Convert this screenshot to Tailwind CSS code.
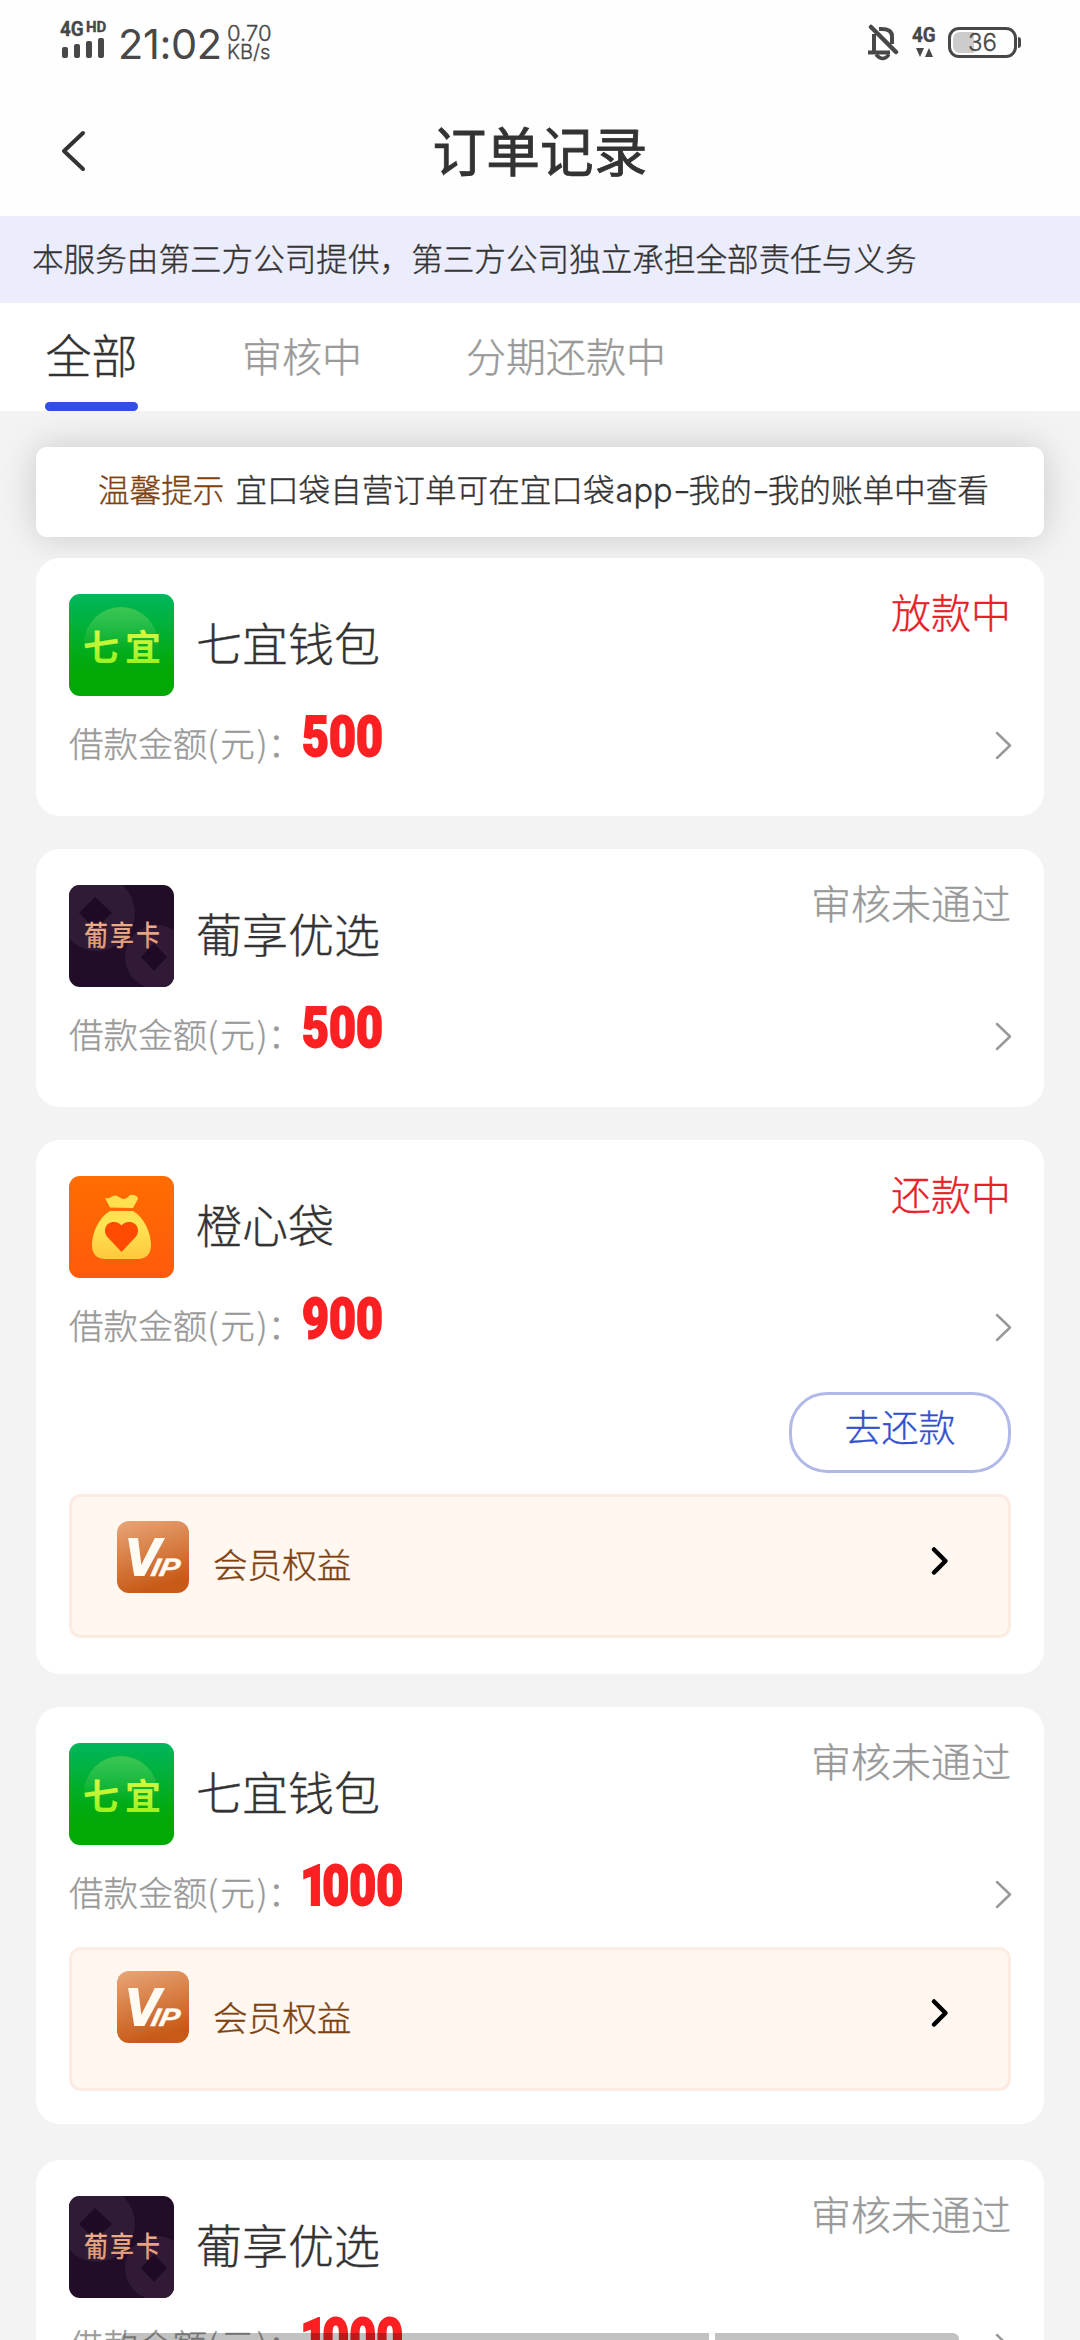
<!DOCTYPE html>
<html lang="zh-CN">
<head>
<meta charset="utf-8">
<title>订单记录</title>
<script src="https://cdn.jsdelivr.net/npm/@tailwindcss/browser@4"></script>
</head>
<body class="relative h-[2340px] w-[1080px] overflow-hidden bg-[#f3f3f3] font-['Noto_Sans_CJK_SC',sans-serif] font-light text-[#333] [-webkit-text-stroke:0.35px]">
<svg class="absolute" width="0" height="0">
  <defs>
    <linearGradient id="g-green" x1="0" y1="0" x2="0" y2="1"><stop offset="0" stop-color="#00b75c"/><stop offset=".75" stop-color="#02a806"/><stop offset="1" stop-color="#02a806"/></linearGradient>
    <linearGradient id="g-circle" x1="0" y1="0" x2="0" y2="1"><stop offset="0" stop-color="#3cc650"/><stop offset=".6" stop-color="#3cc650" stop-opacity="0"/></linearGradient>
    <linearGradient id="g-lime" x1="0" y1="0" x2="0" y2="1"><stop offset="0" stop-color="#f0fb4a"/><stop offset="1" stop-color="#8cf21c"/></linearGradient>
    <linearGradient id="g-orange" x1="0" y1="0" x2="0" y2="1"><stop offset="0" stop-color="#ff6d00"/><stop offset="1" stop-color="#ff5a0c"/></linearGradient>
    <linearGradient id="g-bag" x1="0" y1="0" x2="0" y2="1"><stop offset="0" stop-color="#ffdf4e"/><stop offset=".5" stop-color="#ffe453"/><stop offset="1" stop-color="#ffc83c"/></linearGradient>
    <linearGradient id="g-vip" x1="0" y1="0" x2=".3" y2="1"><stop offset="0" stop-color="#e8a678"/><stop offset=".55" stop-color="#d67c42"/><stop offset="1" stop-color="#c75a17"/></linearGradient>
    <linearGradient id="g-rose" x1="0" y1="0" x2="0" y2="1"><stop offset="0" stop-color="#f3b693"/><stop offset="1" stop-color="#d99470"/></linearGradient>
    <clipPath id="tile"><rect width="105" height="102" rx="11"/></clipPath>
  </defs>
  <symbol id="logo-qiyi" viewBox="0 0 105 102">
    <g clip-path="url(#tile)">
      <rect width="105" height="102" fill="url(#g-green)"/>
      <circle cx="52" cy="50" r="37" fill="url(#g-circle)"/>
      <text x="14" y="66.500" font-size="36" font-weight="700" textLength="78" font-family="'Noto Sans CJK SC',sans-serif" fill="url(#g-lime)">七宜</text>
    </g>
  </symbol>
  <symbol id="logo-puxiang" viewBox="0 0 105 102">
    <g clip-path="url(#tile)">
      <rect width="105" height="102" fill="#220d28"/>
      <circle cx="28" cy="28" r="38" fill="#301b37"/>
      <path d="M26 12 43 28 26 44 10 28Z" fill="#1e0a24"/>
      <circle cx="88" cy="72" r="32" fill="#301a35"/>
      <path d="M85 58 98 72 85 86 72 72Z" fill="#1f0a25"/>
      <g transform="translate(0 -12.500) scale(1 1.200)"><text x="15" y="61" font-size="24" font-weight="500" textLength="76" lengthAdjust="spacing" font-family="'Noto Sans CJK SC',sans-serif" fill="url(#g-rose)">葡享卡</text></g>
    </g>
  </symbol>
  <symbol id="logo-orange" viewBox="0 0 105 102">
    <rect width="105" height="102" rx="11" fill="url(#g-orange)"/>
    <path d="M41 31.500 36 22q4 1 6-1 4-3 8 0 5 4 9 0 2-3 6-2 4 1 4 4l-5 9ZM41 35h23c11 6 18 22 18 34 0 9-5 14-13 14H36c-8 0-13-5-13-14 0-12 7-28 18-34Z" fill="url(#g-bag)"/>
    <path d="M52.500 76 38 60.500C34 55.500 36 47 43.500 46c4-.5 7 1 9 3.500 2-2.500 5-4 9-3.500C69 47 71 55.500 67 60.500Z" fill="#ff4a02"/>
  </symbol>
  <symbol id="logo-vip" viewBox="0 0 72 72">
    <rect width="72" height="72" rx="12" fill="url(#g-vip)"/>
    <g font-family="'Liberation Sans',sans-serif" font-weight="700" font-style="italic" fill="#fffaf2" stroke="#fffaf2">
      <text x="8" y="54" font-size="52" stroke-width="2">V</text>
      <text transform="translate(33 54.500) skewX(-12)" font-size="25" stroke-width=".5" textLength="28" lengthAdjust="spacingAndGlyphs">IP</text>
    </g>
  </symbol>
</svg>

<header class="h-[216px] bg-[#fefefe]">
  <div class="flex h-[84px] items-start justify-between pr-[59px] pl-[60px] font-[Roboto,sans-serif] text-[#484848]">
    <div class="flex items-start">
      <div class="w-[47px] pt-[20px]">
        <div class="flex h-[17px] items-start font-bold"><span class="w-[26px] origin-left scale-x-[.9] text-[21px] leading-[18px]">4G</span><span class="text-[15px] leading-[14px]">HD</span></div>
        <svg class="ml-0.5" width="44" height="21" viewBox="0 0 44 21" fill="#484848"><rect y="10" width="6" height="11" rx="2"/><rect x="12" y="7" width="6" height="14" rx="2"/><rect x="24" y="4" width="6" height="17" rx="2"/><rect x="36" y="1" width="6" height="20" rx="2"/></svg>
      </div>
      <span class="ml-[11px] w-[109px] pt-[20px] font-[Inter,sans-serif] text-[41.500px] leading-[49px] font-normal tracking-[-0.4px] [-webkit-text-stroke:0]">21:02</span>
      <div class="pt-[24px] font-[Inter,sans-serif] text-[22px] leading-[19px] font-light"><div>0.70</div><div class="text-[20px]">KB/s</div></div>
    </div>
    <div class="flex items-start pt-[24px]">
      <svg width="32" height="37" viewBox="0 0 32 37" fill="none" stroke="#484848" stroke-width="4"><path d="M6 10v18M11 5q14-1 13 9v6"/><path d="M0 28.500H22" stroke-width="4"/><path d="M8 30.500q7 8 13 0" stroke-width="3.500"/><path d="M3 3 28 28" stroke-width="4.500" stroke-linecap="round"/></svg>
      <div class="ml-[12px] w-[36px]"><div class="h-[23px] origin-left scale-x-[.9] text-[21px] leading-[23px] font-bold">4G</div><svg class="ml-1" width="18" height="10" viewBox="0 0 18 10" fill="#484848"><path d="M0 1h8L4 10ZM9 10h8L13 1Z"/></svg></div>
      <div class="relative mt-[3px] flex h-[31px] w-[69px] items-center justify-center rounded-[11px] border-[3px] border-[#484848]">
        <div class="absolute top-[2px] left-[2px] h-[21px] w-[21px] rounded-l-[7px] bg-[#ccc]"></div>
        <span class="relative font-[Inter,sans-serif] text-[24px] leading-6">36</span>
      </div>
      <div class="mt-[13px] ml-px h-[11px] w-[3px] rounded-r-full bg-[#484848]"></div>
    </div>
  </div>
  <div class="flex h-[132px] items-start pl-[60px]">
    <svg class="mt-[45px]" width="28" height="44" viewBox="0 0 28 44" fill="none" stroke="#333" stroke-width="4" stroke-linecap="round" stroke-linejoin="round"><path d="M23 4 4 22 23 40"/></svg>
    <h1 class="flex-1 pt-[29px] pr-[88px] text-center text-[53.700px] leading-[72px] font-normal [-webkit-text-stroke:0.8px]">订单记录</h1>
  </div>
</header>

<div class="h-[87px] bg-[#ebedfc] pl-8 text-[31.600px] leading-[82px]">本服务由第三方公司提供，第三方公司独立承担全部责任与义务</div>

<nav class="flex h-[108px] items-start bg-white pl-[45px] text-[40px] leading-[104px] text-[#999]">
  <div class="w-[93px] text-center text-[46px] text-[#333]"><div class="h-[99px] leading-[101px]">全部</div><div class="relative h-[9px] rounded-full bg-[#324fdf]"></div></div>
  <div class="ml-[104px]">审核中</div>
  <div class="ml-[104px]">分期还款中</div>
</nav>

<main class="px-9 pt-9">
  <div class="h-[90px] rounded-[11px] bg-white pl-[62px] text-[31.600px] leading-[82px] whitespace-nowrap shadow-[0_0_36px_rgba(0,0,0,0.17)]"><span class="text-[#7d420f]">温馨提示</span><span class="ml-[11px]">宜口袋自营订单可在宜口袋<span class="ml-px font-[Inter,sans-serif] text-[32.500px]">app</span><span class="inline-block w-4 origin-left scale-x-125 font-[Inter,sans-serif]">-</span>我的<span class="inline-block w-4 origin-left scale-x-125 font-[Inter,sans-serif]">-</span>我的账单中查看</span></div>
  <div id="orders" class="relative mt-[21px] flex flex-col gap-[33px]"></div>
</main>

<div class="absolute bottom-0 left-[121px] flex h-[7px] gap-[6px]">
  <div class="w-[588px] rounded-tl-md bg-black/24"></div>
  <div class="w-[244px] rounded-tr-md bg-black/24"></div>
</div>

<script>
const orders = [
  {logo: 'logo-qiyi', name: '七宜钱包', amount: '500', status: '放款中', active: true},
  {logo: 'logo-puxiang', name: '葡享优选', amount: '500', status: '审核未通过'},
  {logo: 'logo-orange', name: '橙心袋', amount: '900', status: '还款中', active: true, repay: true, vip: true},
  {logo: 'logo-qiyi', name: '七宜钱包', amount: '1000', status: '审核未通过', vip: true},
  {logo: 'logo-puxiang', name: '葡享优选', amount: '1000', status: '审核未通过'},
];
const repay = `<div class="flex h-[102px] justify-end"><button class="h-[81px] w-[222px] rounded-[38px] border-[3px] border-[#b1b9e9] text-[37px] leading-[63px] pb-3 font-light text-[#3450cf]">去还款</button></div>`;
const vip = o => `<div class="flex h-[144px] items-start rounded-[12px] border-[3px] border-[#fcebe0] bg-[#fff7f0] pl-[45px]">
  <svg class="${o.repay ? 'mt-6' : 'mt-[21px]'}" width="72" height="72"><use href="#logo-vip"/></svg>
  <span class="ml-6 flex-1 pt-[40px] text-[34.600px] leading-[52px] text-[#7d420f]">会员权益</span>
  <svg class="${o.repay ? 'mt-[48px]' : 'mt-[47px]'} mr-[58px]" width="20" height="32" viewBox="0 0 20 32" fill="none" stroke="#000" stroke-width="4.500" stroke-linecap="round" stroke-linejoin="round"><path d="M4 4.500 15.500 16 4 27.500"/></svg>
</div>`;
const digits = a => a.startsWith('1') ? `<span class="-ml-[2px] -mr-[6px]">1</span>${a.slice(1)}` : a;
document.getElementById('orders').innerHTML = orders.map(o => `
<section class="rounded-[24px] bg-white px-[33px] pt-9 ${o.vip ? (o.repay ? 'pb-9' : 'mb-[3px] pb-[33px]') : ''}">
  <div class="flex h-[102px] items-start">
    <svg width="105" height="102"><use href="#${o.logo}"/></svg>
    <h2 class="ml-[22px] flex-1 text-[46px] leading-[94px]">${o.name}</h2>
    <span class="-mt-0.5 text-[40px] leading-[38px] ${o.active ? 'text-[#e62129]' : 'text-[#999]'}">${o.status}</span>
  </div>
  <div class="flex ${o.vip && !o.repay ? 'h-[102px]' : o.repay ? 'h-[114px]' : 'h-[120px]'} items-start">
    <span class="w-[233px] pt-[20px] text-[34.600px] leading-[52px] whitespace-nowrap text-[#999]">借款金额(<span class="mx-[2px]">元</span>)：</span>
    <span class="flex-1 pt-[13px]"><span class="inline-block origin-left scale-x-[.83] font-[Roboto,sans-serif] text-[56px] leading-[56px] font-black text-[#fc2023] [-webkit-text-stroke:1.800px]">${digits(o.amount)}</span></span>
    <svg class="mt-[33px] -mr-[3px]" width="20" height="32" viewBox="0 0 20 32" fill="none" stroke="#999" stroke-width="2.500" stroke-linecap="round" stroke-linejoin="round"><path d="M3 4 16 16.500 3 29"/></svg>
  </div>
  ${o.repay ? repay : ''}${o.vip ? vip(o) : ''}
</section>`).join('');
</script>
</body>
</html>
